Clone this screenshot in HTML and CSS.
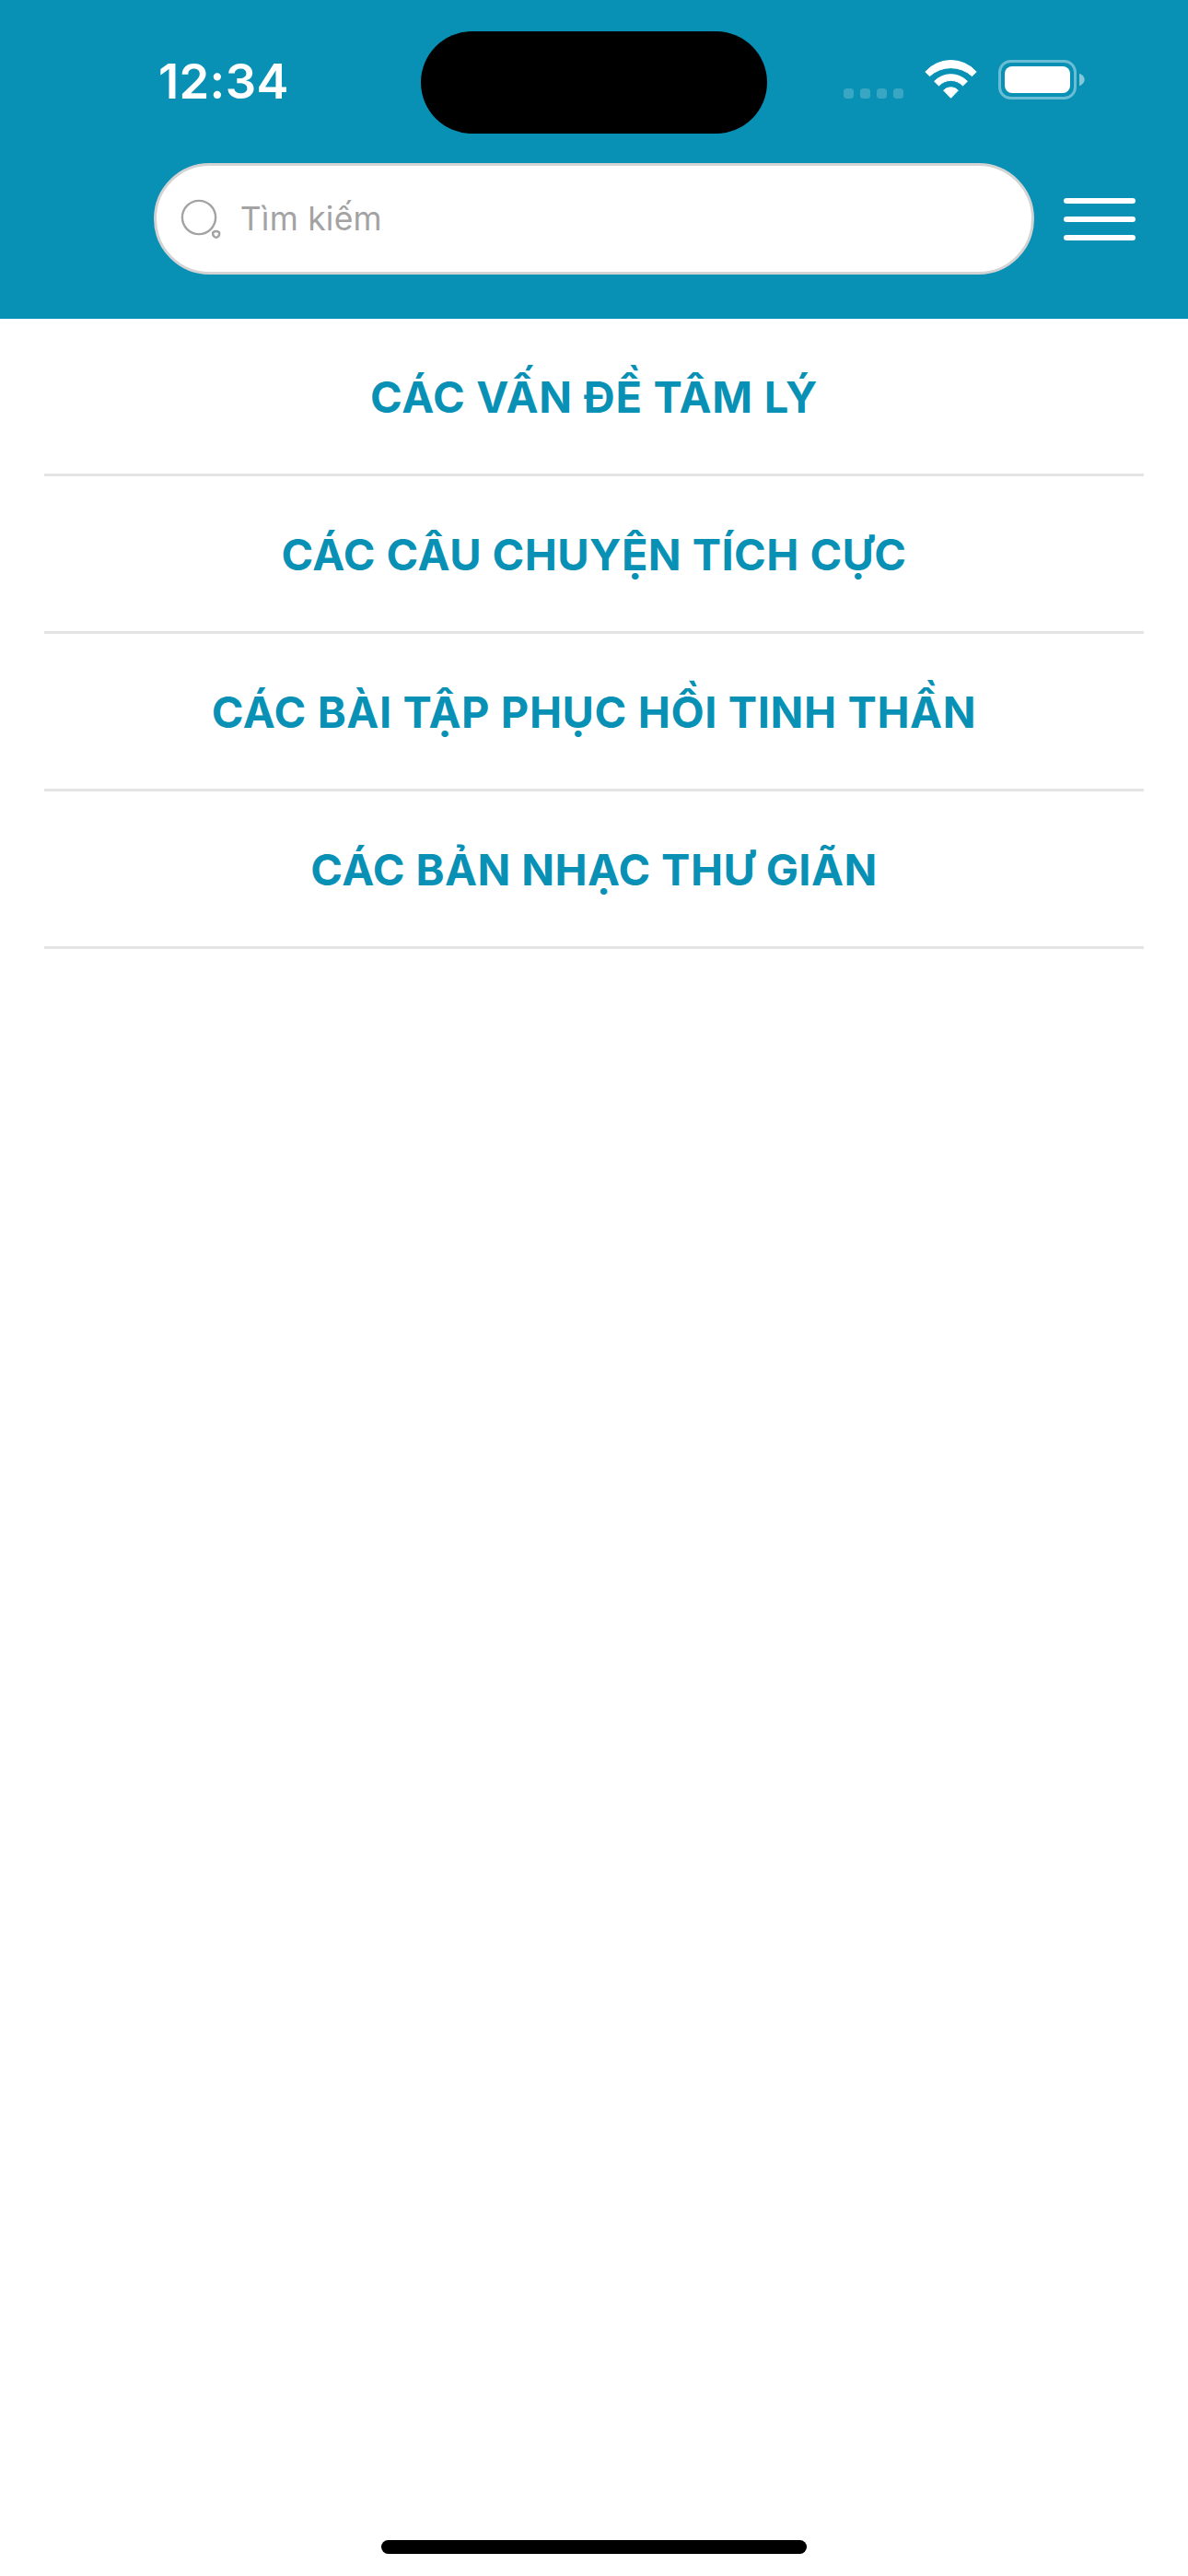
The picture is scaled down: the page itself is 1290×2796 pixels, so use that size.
FILE: index.html
```html
<!DOCTYPE html>
<html lang="vi">
<head>
<meta charset="utf-8">
<title>Tâm lý</title>
<link rel="stylesheet" href="styles.css">
</head>
<body>
<div class="screen">
  <header class="header">
    <div class="status-bar">
      <div class="time">12:34</div>
      <div class="island"></div>
      <div class="status-icons">
        <svg class="signal" width="65" height="11" viewBox="0 0 65 11">
          <rect width="11" height="11" rx="3.5"/><rect x="18" width="11" height="11" rx="3.5"/><rect x="36" width="11" height="11" rx="3.5"/><rect x="54" width="11" height="11" rx="3.5"/>
        </svg>
        <svg class="wifi" width="57" height="43" viewBox="0 0 57 43">
          <path d="M.8 13A37 37 0 0 1 56.2 13L51.5 17.6A34 34 0 0 0 5.5 17.6Z"/>
          <path d="M10.6 23.3A24.8 24.8 0 0 1 46.4 23.3L41.5 28A17.8 17.8 0 0 0 15.5 28Z"/>
          <path d="M20.6 33.1A11 11 0 0 1 36.4 33.1L28.5 41.3Z"/>
        </svg>
        <svg class="battery" width="94" height="43" viewBox="0 0 94 43">
          <rect class="battery-case" x="1.5" y="1.5" width="82" height="40" rx="12"/>
          <rect class="battery-level" x="7" y="7" width="71" height="29" rx="8"/>
          <path class="battery-cap" d="M88 14.8C95.5 17.5 95.5 25.5 88 28.2Z"/>
        </svg>
      </div>
    </div>
    <div class="toolbar">
      <div class="search">
        <svg class="search-icon" width="44" height="44" viewBox="0 0 44 44">
          <circle cx="20" cy="20" r="18.1"/>
          <path class="handle" d="M35.3 36.2Q38.7 33.8 42 36.2C42.6 39.5 41 41.7 38.7 41.7S34.8 39.5 35.3 36.2Z"/>
        </svg>
        <span class="placeholder">Tìm kiếm</span>
      </div>
      <div class="menu-button"><span class="bar"></span><span class="bar"></span><span class="bar"></span></div>
    </div>
  </header>
  <nav class="menu">
    <a class="menu-item topics">CÁC VẤN ĐỀ TÂM LÝ</a>
    <a class="menu-item stories">CÁC CÂU CHUYỆN TÍCH CỰC</a>
    <a class="menu-item exercises">CÁC BÀI TẬP PHỤC HỒI TINH THẦN</a>
    <a class="menu-item music">CÁC BẢN NHẠC THƯ GIÃN</a>
  </nav>
  <div class="home-indicator"></div>
</div>
</body>
</html>
```
FILE: styles.css
```css
* { box-sizing: border-box; }

body {
  margin: 0;
  background: #fff;
  font-family: Inter, "Liberation Sans", sans-serif;
}

.screen {
  display: flex;
  flex-direction: column;
  width: 1290px;
  height: 2796px;
}

.header {
  height: 346px;
  background: #0891b5;
}

.status-bar {
  display: grid;
  grid-template-columns: 457px 376px 1fr;
  align-items: start;
  height: 177px;
  padding-top: 33.5px;
}

.time {
  padding-left: 172px;
  margin-top: 4.5px;
  color: #fff;
  font-size: 52.5px;
  font-weight: 600;
  line-height: 100px;
  letter-spacing: .35px;
}

.island {
  height: 111px;
  border-radius: 56px;
  background: #000;
}

.status-icons {
  display: flex;
  align-items: flex-end;
  height: 74.5px;
  padding-left: 83px;
}

.signal { margin-bottom: 1px; fill: #fff; fill-opacity: .2; }
.wifi { margin-left: 23px; fill: #fff; stroke: #fff; stroke-width: 1; stroke-linejoin: round; }
.battery { margin-left: 23px; }
.battery-case { fill: none; stroke: #fff; stroke-opacity: .4; stroke-width: 3; }
.battery-level { fill: #fff; }
.battery-cap { fill: #fff; fill-opacity: .5; }

.toolbar {
  display: flex;
  align-items: center;
  gap: 32px;
  padding-left: 167px;
}

.search {
  display: flex;
  align-items: center;
  width: 956px;
  height: 121px;
  padding-left: 26px;
  border: 3px solid #d3d3d3;
  border-radius: 60.5px;
  background: #fff;
}

.search-icon {
  fill: none;
  stroke: #a3a3a3;
  stroke-width: 2.4;
}

.search-icon .handle { stroke-width: 2.5; stroke-linejoin: round; }

.placeholder {
  margin-left: 20.7px;
  color: #a3a3a3;
  font-size: 35.5px;
  line-height: 60px;
  letter-spacing: .22px;
}

.menu-button {
  display: flex;
  flex-direction: column;
  gap: 14px;
  width: 78px;
  padding-top: 1px;
}

.bar {
  height: 6px;
  border-radius: 3px;
  background: #fff;
}

.menu {
  display: flex;
  flex-direction: column;
  padding: 0 48px;
}

.menu-item {
  height: 171px;
  padding-top: 1px;
  border-bottom: 3px solid #e4e4e4;
  color: #0891b5;
  font-size: 47px;
  font-weight: 700;
  line-height: 168px;
  text-align: center;
}

.topics { letter-spacing: .74px; }
.stories { letter-spacing: .43px; }
.exercises { letter-spacing: .6px; }
.music { letter-spacing: .4px; }

.home-indicator {
  width: 462px;
  height: 15px;
  margin: auto auto 24px;
  border-radius: 7.5px;
  background: #000;
}
```
